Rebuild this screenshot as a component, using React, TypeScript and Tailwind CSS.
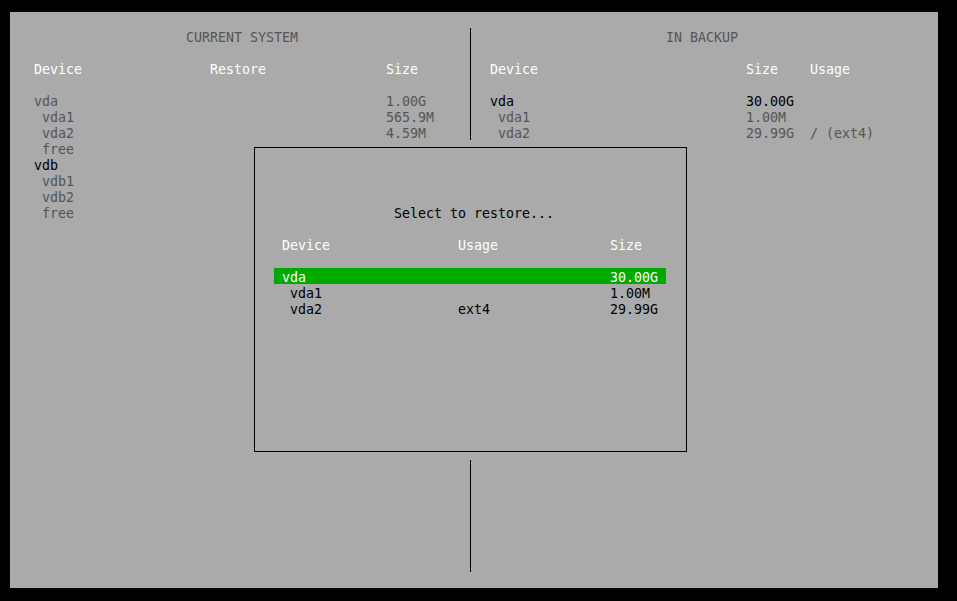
import React from "react";

const dim = "text-[#555555]";
const white = "text-white";
const blk = "text-black";

function Row({ children, className = "" }: { children?: React.ReactNode; className?: string }) {
  return <div className={`flex h-4 whitespace-pre ${className}`}>{children}</div>;
}

export default function App() {
  return (
    <div className="w-[957px] h-[601px] bg-black pt-[12px] pl-[10px] font-['DejaVu_Sans_Mono','Liberation_Mono',monospace] text-[13.3px] leading-[19px]">
      <div className="relative w-[928px] h-[576px] bg-[#aaaaaa] pt-4">
        <div className="flex h-[544px]">
          {/* Left panel */}
          <div className="w-[456px] flex flex-col">
            <Row><span className={`pl-[176px] ${dim}`}>CURRENT SYSTEM</span></Row>
            <Row />
            <Row className={`pl-[24px] ${white}`}>
              <span className="w-[176px]">Device</span>
              <span className="w-[176px]">Restore</span>
              <span>Size</span>
            </Row>
            <Row />
            <Row className={`pl-[24px] ${dim}`}>
              <span className="w-[352px]">vda</span>
              <span>1.00G</span>
            </Row>
            <Row className={`pl-[24px] ${dim}`}>
              <span className="w-[352px]"> vda1</span>
              <span>565.9M</span>
            </Row>
            <Row className={`pl-[24px] ${dim}`}>
              <span className="w-[352px]"> vda2</span>
              <span>4.59M</span>
            </Row>
            <Row className={`pl-[24px] ${dim}`}><span> free</span></Row>
            <Row className={`pl-[24px] ${blk}`}><span>vdb</span></Row>
            <Row className={`pl-[24px] ${dim}`}><span> vdb1</span></Row>
            <Row className={`pl-[24px] ${dim}`}><span> vdb2</span></Row>
            <Row className={`pl-[24px] ${dim}`}><span> free</span></Row>
          </div>
          {/* Divider */}
          <div className="w-2 pl-[4px]">
            <div className="w-px h-full bg-black" />
          </div>
          {/* Right panel */}
          <div className="flex-1 flex flex-col">
            <Row><span className={`pl-[192px] ${dim}`}>IN BACKUP</span></Row>
            <Row />
            <Row className={`pl-[16px] ${white}`}>
              <span className="w-[256px]">Device</span>
              <span className="w-[64px]">Size</span>
              <span>Usage</span>
            </Row>
            <Row />
            <Row className={`pl-[16px] ${blk}`}>
              <span className="w-[256px]">vda</span>
              <span className="w-[64px]">30.00G</span>
            </Row>
            <Row className={`pl-[16px] ${dim}`}>
              <span className="w-[256px]"> vda1</span>
              <span className="w-[64px]">1.00M</span>
            </Row>
            <Row className={`pl-[16px] ${dim}`}>
              <span className="w-[256px]"> vda2</span>
              <span className="w-[64px]">29.99G</span>
              <span>/ (ext4)</span>
            </Row>
          </div>
        </div>

        {/* Dialog overlay */}
        <div className="absolute left-[240px] top-[128px] w-[440px] h-[320px] bg-[#aaaaaa]">
          <div className="absolute left-[4px] top-[7px] w-[433px] h-[305px] border border-black" />
          <div className="relative flex flex-col pt-[64px]">
            <Row><span className={`pl-[144px] ${blk}`}>Select to restore...</span></Row>
            <Row />
            <Row className={`pl-[32px] ${white}`}>
              <span className="w-[176px]">Device</span>
              <span className="w-[152px]">Usage</span>
              <span>Size</span>
            </Row>
            <Row />
            <div className="ml-[24px] w-[392px]">
              <Row className={`pl-[8px] bg-[#00aa00] ${white}`}>
                <span className="w-[328px]">vda</span>
                <span>30.00G</span>
              </Row>
            </div>
            <Row className={`pl-[32px] ${blk}`}>
              <span className="w-[328px]"> vda1</span>
              <span>1.00M</span>
            </Row>
            <Row className={`pl-[32px] ${blk}`}>
              <span className="w-[176px]"> vda2</span>
              <span className="w-[152px]">ext4</span>
              <span>29.99G</span>
            </Row>
          </div>
        </div>
      </div>
    </div>
  );
}
